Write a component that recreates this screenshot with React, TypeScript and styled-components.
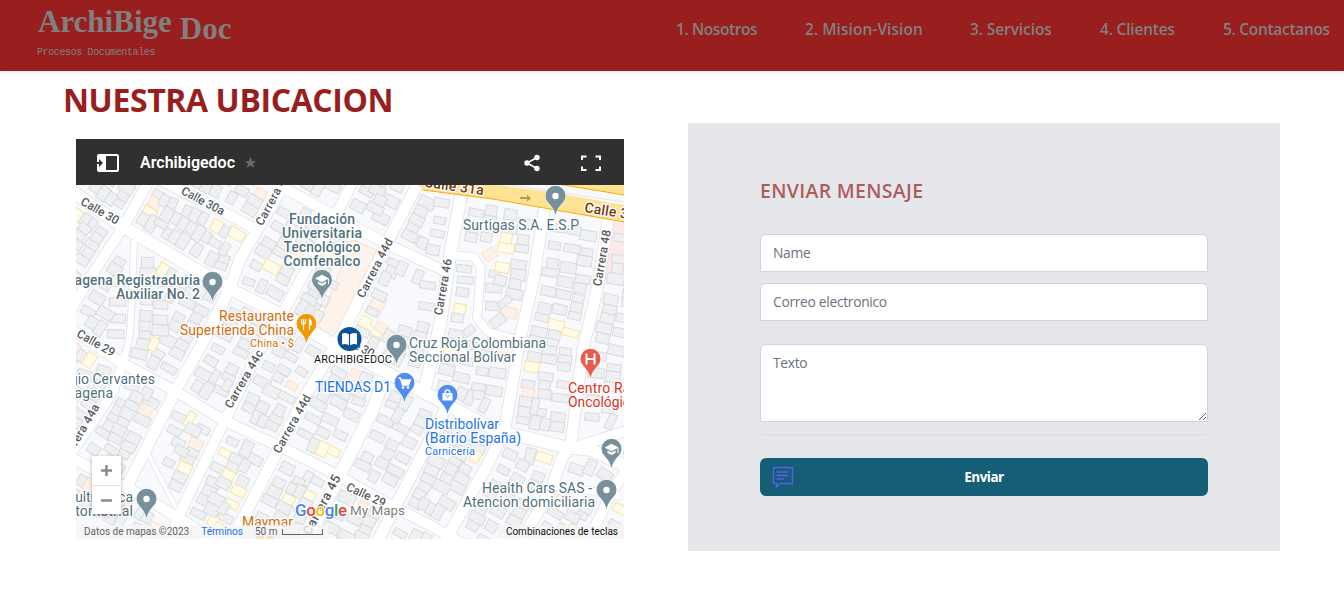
import React from "react";
import styled, { createGlobalStyle } from "styled-components";

const RED = "#981f1e";

const GlobalStyle = createGlobalStyle`
  * { box-sizing: border-box; }
  body { margin: 0; background: #fff; font-family: "Open Sans", "Noto Sans", sans-serif; }
  h1, h2, p { margin: 0; }
`;

const Page = styled.div`
  height: 601px;
  overflow: hidden;
`;

const Header = styled.header`
  display: flex;
  justify-content: space-between;
  height: 71px;
  padding: 0 14px 0 37px;
  background: ${RED};
  color: #808080;
  box-shadow: 0 2px 3px rgba(60, 40, 110, 0.1);
`;

const Brand = styled.div`
  display: flex;
  flex-direction: column;
`;

const BrandName = styled.div`
  display: flex;
  gap: 8px;
  height: 46px;
  padding: 4px 0 0 1px;
  font: bold 31px/36px "Liberation Serif", serif;
`;

const BrandSuffix = styled.span`
  padding-top: 7px;
`;

const Tagline = styled.div`
  font: 10px/14px "Liberation Mono", monospace;
  letter-spacing: -0.38px;
`;

const Nav = styled.nav`
  display: flex;
  gap: 48px;
  padding-top: 17px;
`;

const NavItem = styled.a<{ $w: number; $track: number }>`
  width: ${(p) => p.$w}px;
  font-size: 15.5px;
  font-weight: 600;
  line-height: 24px;
  letter-spacing: ${(p) => p.$track}px;
  white-space: nowrap;
`;

const Main = styled.main`
  display: grid;
  grid-template-columns: 560px 592px;
  column-gap: 64px;
  padding: 0 64px;
`;

const Title = styled.h1`
  grid-column: 1 / -1;
  height: 52px;
  padding-top: 9px;
  margin-left: -1px;
  color: ${RED};
  font-size: 32px;
  font-weight: 700;
  line-height: 40px;
  letter-spacing: -0.4px;
`;

const MapCard = styled.section`
  margin: 16px 0 0 12px;
  width: 548px;
  height: 400px;
`;

const MapBar = styled.div`
  display: flex;
  align-items: center;
  height: 46px;
  padding: 1px 22px 0 21px;
  background: #2f302f;
  color: #fff;
  font: 500 16px/20px Roboto, sans-serif;
`;

const MapName = styled.span`
  margin: 0 10px 0 20px;
  width: 95px;
  font-weight: 600;
`;

const MapActions = styled.div`
  display: flex;
  gap: 40px;
  margin-left: auto;
`;

const MapBody = styled.div`
  position: relative;
  height: 354px;
  overflow: hidden;
`;

const ZoomControl = styled.div`
  position: absolute;
  left: 16px;
  top: 271px;
  display: flex;
  flex-direction: column;
  width: 29px;
  background: #fff;
  box-shadow: 0 1px 4px rgba(0, 0, 0, 0.3);
`;

const ZoomButton = styled.div`
  display: flex;
  align-items: center;
  justify-content: center;
  height: 29px;
  & + & { border-top: 1px solid #e0e0e0; }
`;

const Legal = styled.div`
  position: absolute;
  left: 0;
  right: 0;
  bottom: 0;
  display: flex;
  justify-content: space-between;
  height: 14px;
  font: 10px/14px Roboto, sans-serif;
  color: #5f6368;
`;

const LegalGroup = styled.div`
  display: flex;
  gap: 12px;
  padding: 0 6px 0 8px;
  background: rgba(245, 245, 245, 0.8);
`;

const TermsLink = styled.span`
  color: #1a73e8;
`;

const Shortcuts = styled.span`
  color: #111;
`;

const Scale = styled.span`
  display: flex;
  gap: 5px;
`;

const ScaleBar = styled.i`
  width: 41px;
  height: 6px;
  margin-top: 4px;
  border: 1px solid #666;
  border-top: 0;
`;

const FormCard = styled.section`
  height: 428px;
  padding: 54px 72px 0;
  background: #e5e7eb;
`;

const FormTitle = styled.h2`
  height: 57px;
  color: ${RED};
  opacity: 0.7;
  font-size: 19.5px;
  font-weight: 600;
  line-height: 28px;
  letter-spacing: 0.3px;
`;

const Fields = styled.div`
  display: flex;
  flex-direction: column;
  height: 200px;
  border-radius: 6px;
  box-shadow: 0 1px 2px rgba(0, 0, 0, 0.05);
`;

const fieldLook = `
  display: block;
  width: 100%;
  padding: 8px 12px;
  border: 1px solid #d1d5db;
  border-radius: 6px 6px 0 0;
  background: #fff;
  font: 13.8px/20px "Open Sans", sans-serif;
  letter-spacing: -0.3px;
  outline: none;
  &::placeholder { color: #6b7280; opacity: 1; }
`;

const Input = styled.input<{ $after: number }>`
  ${fieldLook}
  height: 38px;
  padding-top: 7px;
  margin-bottom: ${(p) => p.$after}px;
`;

const TextArea = styled.textarea`
  ${fieldLook}
  height: 78px;
  resize: vertical;
`;

const Submit = styled.button`
  display: grid;
  grid-template-columns: 22px 1fr 22px;
  align-items: center;
  width: 100%;
  height: 38px;
  margin-top: 24px;
  padding: 0 12px;
  border: 0;
  border-radius: 6px;
  background: #155e75;
  color: #fff;
  font: 700 13.5px/20px "Open Sans", sans-serif;
  letter-spacing: -0.5px;
`;

/* ---------- map drawing ---------- */

type Pt = [number, number];
type Road = { w: number; p: Pt[] };

const roads: Road[] = [
  { w: 12, p: [[66, 187], [122, 226], [190, 266], [230, 289], [282, 315], [335, 345], [408, 384], [495, 430], [565, 447], [592, 450], [634, 470]] },
  { w: 10, p: [[160, 180], [210, 205], [257, 230]] },
  { w: 10, p: [[275, 183], [317, 206], [350, 224], [393, 247], [447, 272]] },
  { w: 10, p: [[70, 328], [120, 362], [177, 392], [223, 420], [287, 450], [337, 475], [387, 503], [433, 527], [465, 545]] },
  { w: 10, p: [[70, 457], [137, 493], [187, 523], [220, 545]] },
  { w: 6, p: [[134, 240], [132, 298], [130, 335], [125, 356]] },
  { w: 9, p: [[125, 356], [113, 392], [100, 412], [68, 458]] },
  { w: 10, p: [[148, 183], [123, 227], [90, 278], [66, 318]] },
  { w: 11, p: [[285, 183], [257, 230], [240, 259], [230, 288], [203, 342], [177, 388], [127, 486]] },
  { w: 10, p: [[354, 180], [328, 230], [283, 312], [257, 355], [223, 424], [183, 507], [166, 545]] },
  { w: 11, p: [[418, 183], [390, 237], [342, 334], [303, 400], [272, 462], [237, 530], [230, 545]] },
  { w: 12, p: [[462, 190], [450, 255], [440, 325], [425, 388]] },
  { w: 12, p: [[384, 378], [373, 409], [335, 485], [303, 548]] },
  { w: 11, p: [[445, 410], [408, 482], [374, 548]] },
  { w: 11, p: [[545, 205], [533, 282], [520, 339], [505, 428], [491, 458], [443, 545]] },
  { w: 11, p: [[609, 215], [597, 290], [583, 349], [571, 444], [562, 458], [551, 489], [519, 545]] },
  { w: 10, p: [[630, 465], [613, 490], [586, 545]] },
  { w: 8, p: [[450, 255], [474, 257], [481, 268], [477, 318], [488, 332], [518, 340]] },
  { w: 7, p: [[549, 484], [620, 496]] },
  { w: 4, p: [[145, 448], [176, 508]] },
  { w: 10, p: [[575, 447], [630, 430]] },
];

const highwayAxis: Road = { w: 24, p: [[417, 178], [495, 190], [550, 200], [630, 214]] };

const distToSegment = (x: number, y: number, a: Pt, b: Pt) => {
  const dx = b[0] - a[0];
  const dy = b[1] - a[1];
  const t = Math.max(0, Math.min(1, ((x - a[0]) * dx + (y - a[1]) * dy) / (dx * dx + dy * dy)));
  return Math.hypot(x - a[0] - t * dx, y - a[1] - t * dy);
};

const roadClearance = (x: number, y: number) => {
  let best = 999;
  for (const r of [...roads, highwayAxis])
    for (let i = 1; i < r.p.length; i++)
      best = Math.min(best, distToSegment(x, y, r.p[i - 1], r.p[i]) - r.w / 2);
  return best;
};

/* The university block and the bare lots beside it carry no plots. */
const openGround = (x: number, y: number) =>
  (x > 322 && x < 372 && y > 236 && y < 330 && x - 322 > (330 - y) * 0.2) ||
  (x > 385 && x < 425 && y > 278 && y < 325) ||
  (x > 142 && x < 168 && y > 445 && y < 500);

type Building = { x: number; y: number; w: number; h: number; a: number; kind: number };

/* Lines both sides of every street with plots, leaving crossings free. */
const buildBlocks = (): Building[] => {
  let seed = 41;
  const rnd = () => {
    seed = (seed * 16807) % 2147483647;
    return seed / 2147483647;
  };
  const out: Building[] = [];
  const order = [10, 9, 8, 12, 13, 11, 14, 15, 16, 7, 6, 5, 17, 0, 3, 4, 1, 2];
  for (const off of [10, 26]) {
    for (const idx of order) {
      const r = roads[idx];
      for (let i = 1; i < r.p.length; i++) {
        const [ax, ay] = r.p[i - 1];
        const [bx, by] = r.p[i];
        const len = Math.hypot(bx - ax, by - ay);
        const ux = (bx - ax) / len;
        const uy = (by - ay) / len;
        for (const side of [-1, 1]) {
          let t = 1;
          while (t < len - 4) {
            const w = 7 + rnd() * 4;
            const h = 11 + rnd() * 6;
            const d = side * (r.w / 2 + off + rnd() * 2);
            const x = ax + ux * (t + w / 2) - uy * d;
            const y = ay + uy * (t + w / 2) + ux * d;
            t += w + (rnd() > 0.88 ? 6 : 0);
            const k = rnd();
            if (roadClearance(x, y) < 8 || openGround(x, y)) continue;
            if (out.some((o) => Math.hypot(o.x - x, o.y - y) < (o.w + o.h + w + h) / 4 - 2.6)) continue;
            out.push({ x, y, w, h, a: (Math.atan2(uy, ux) * 180) / Math.PI, kind: k < 0.07 ? 1 : k < 0.1 ? 2 : 0 });
          }
        }
      }
    }
  }
  return out;
};

const buildings = buildBlocks();
const fills = ["#eff0f2", "#fffbe9", "#fef1e8"];
const strokes = ["#d9dbdf", "#fbe3a0", "#fbe0cb"];
const toPath = (p: Pt[]) => "M" + p.map((q) => q.join(" ")).join("L");

const Label = styled.text<{ $c?: string; $s?: number; $wt?: number }>`
  font-family: Roboto, sans-serif;
  font-size: ${(p) => p.$s ?? 14}px;
  font-weight: ${(p) => p.$wt ?? 400};
  fill: ${(p) => p.$c ?? "#52707c"};
  stroke: #fff;
  stroke-width: 2.6px;
  stroke-linejoin: round;
  paint-order: stroke;
`;

type Line = {
  t: string; x: number; y: number; w: number;
  c?: string; s?: number; wt?: number; a?: "start" | "middle" | "end"; r?: number;
};

const street = "#565a5e";
const brown = "#77390b";
const labels: Line[] = [
  { t: "Calle 30", x: 100, y: 211, w: 42, r: 30, s: 12, c: street, a: "middle", wt: 500 },
  { t: "Calle 30a", x: 203, y: 201, w: 47, r: 28, s: 12, c: street, a: "middle", wt: 500 },
  { t: "Carrera 44c", x: 274, y: 196, w: 65, r: -62, s: 12, c: street, a: "middle", wt: 500 },
  { t: "Carrera 44d", x: 375, y: 268, w: 65, r: -63, s: 12, c: street, a: "middle", wt: 500 },
  { t: "Carrera 46", x: 443, y: 287, w: 57, r: -80, s: 12, c: street, a: "middle", wt: 500 },
  { t: "Carrera 48", x: 602, y: 258, w: 57, r: -80, s: 12, c: street, a: "middle", wt: 500 },
  { t: "Calle 29", x: 96, y: 355, w: 42, r: 30, s: 12, c: street, a: "middle", wt: 500 },
  { t: "Carrera 44c", x: 244, y: 391, w: 65, r: -60, s: 12, c: street, a: "middle", wt: 500 },
  { t: "Carrera 44d", x: 292, y: 436, w: 65, r: -61, s: 12, c: street, a: "middle", wt: 500 },
  { t: "Carrera 44a", x: 80, y: 445, w: 65, r: -60, s: 12, c: street, a: "middle", wt: 500 },
  { t: "Carrera 45", x: 322, y: 517, w: 66, r: -62, s: 13, c: street, a: "middle", wt: 500 },
  { t: "Calle 29", x: 366, y: 507, w: 42, r: 25, s: 12, c: street, a: "middle", wt: 500 },
  { t: "Calle 30", x: 356, y: 357, w: 40, r: 28, s: 12, c: street, a: "middle", wt: 500 },
  { t: "Calle 31a", x: 454, y: 187, w: 60, r: 8, s: 14, c: brown, a: "middle", wt: 500 },
  { t: "Calle 31", x: 584, y: 212, w: 52, r: 9, s: 14, c: brown, wt: 500 },
  { t: "Fundación", x: 322, y: 224, w: 66, a: "middle", wt: 500 },
  { t: "Universitaria", x: 322, y: 238, w: 80, a: "middle", wt: 500 },
  { t: "Tecnológico", x: 322, y: 252, w: 77, a: "middle", wt: 500 },
  { t: "Comfenalco", x: 322, y: 266, w: 77, a: "middle", wt: 500 },
  { t: "Surtigas S.A. E.S.P", x: 463, y: 230, w: 116 },
  { t: "Cartagena Registraduria", x: 200, y: 285, w: 152, a: "end", wt: 500 },
  { t: "Auxiliar No. 2", x: 200, y: 299, w: 84, a: "end", wt: 500 },
  { t: "Restaurante", x: 294, y: 321, w: 75, a: "end", c: "#d36b08" },
  { t: "Supertienda China", x: 294, y: 335, w: 114, a: "end", c: "#d36b08" },
  { t: "China • $", x: 294, y: 347, w: 44, a: "end", s: 11, c: "#d36b08" },
  { t: "Cruz Roja Colombiana", x: 409, y: 348, w: 137 },
  { t: "Seccional Bolívar", x: 409, y: 362, w: 107 },
  { t: "TIENDAS D1", x: 391, y: 392, w: 76, a: "end", c: "#1a73e8" },
  { t: "Distribolívar", x: 425, y: 429, w: 74, c: "#1a73e8" },
  { t: "(Barrio España)", x: 425, y: 443, w: 96, c: "#1a73e8" },
  { t: "Carnicería", x: 425, y: 455, w: 50, s: 11, c: "#1a73e8" },
  { t: "Centro Radio", x: 568, y: 393, w: 82, c: "#d93025" },
  { t: "Oncológico", x: 568, y: 407, w: 70, c: "#d93025" },
  { t: "Colegio Cervantes", x: 155, y: 384, w: 113, a: "end" },
  { t: "Cartagena", x: 113, y: 398, w: 65, a: "end" },
  { t: "Multimarca", x: 133, y: 502, w: 70, a: "end" },
  { t: "Automotrial", x: 133, y: 516, w: 75, a: "end" },
  { t: "Maymar", x: 242, y: 527, w: 51, c: "#d36b08" },
  { t: "Health Cars SAS -", x: 592, y: 493, w: 110, a: "end" },
  { t: "Atencion domiciliaria", x: 595, y: 507, w: 132, a: "end" },
];

/* Street names turn about their own centre; the rest sit on a baseline. */
const MapLabel = ({ t, x, y, w, c, s, wt, a, r }: Line) => (
  <Label
    x={x} y={y} $c={c} $s={s} $wt={wt} textAnchor={a} textLength={w}
    transform={r ? `rotate(${r} ${x} ${y - (Math.abs(r) > 10 && y > 300 ? 12 : 0)}) translate(0 ${Math.abs(r) > 10 && y > 300 ? -8 : a ? 4 : 0})` : undefined}
  >
    {t}
  </Label>
);

const Pin = ({ x, y, c, children }: { x: number; y: number; c: string; children?: React.ReactNode }) => (
  <g transform={`translate(${x} ${y})`}>
    <path
      d="M0 19C-1.4 13-4 10.5-6.8 7A10 10 0 1 1 6.8 7C4 10.5 1.4 13 0 19Z"
      fill={c} stroke="#fff" strokeWidth="1" paintOrder="stroke"
    />
    {children ?? <circle r="3.2" fill="#fff" />}
  </g>
);

const Cap = () => (
  <g fill="#fff">
    <path d="M-7-1.5L0-5.2 7-1.5 0 2.2Z" />
    <path d="M-4 1.5L0 3.6 4 1.5V4L0 6-4 4ZM6-1h1v5H6Z" />
  </g>
);

const slate = "#78909c";

const CityMap = () => (
  <svg width="548" height="354" viewBox="76 185 548 354" style={{ display: "block" }}>
    <rect x="76" y="185" width="548" height="354" fill="#f7f9fc" />
    <path d="M612 222L628 224V288L602 279Z" fill="#fce8e6" />
    <path d="M352 240L377 250 334 338 318 326Z" fill="#fef3ea" stroke="#fbe0cb" />
    <path d="M309 289L327 290 315 322 296 314Z" fill="#ececec" stroke="#dadce0" />
    <path d="M363 315L372 320 370 326 383 332 379 338 357 327Z" fill="#fffbe9" stroke="#fbe3a0" />
    <path d="M376 292L387 300 378 318 366 312Z" fill="#fef1e8" stroke="#fbe0cb" />
    {buildings.map((b, i) => (
      <rect
        key={i} x={-b.w / 2} y={-b.h / 2} width={b.w} height={b.h}
        fill={fills[b.kind]} stroke={strokes[b.kind]} strokeWidth="1"
        transform={`translate(${b.x.toFixed(1)} ${b.y.toFixed(1)}) rotate(${b.a.toFixed(1)})`}
      />
    ))}
    <g fill="none" strokeLinejoin="round">
      {roads.map((r, i) => <path key={i} d={toPath(r.p)} stroke="#dfe2e6" strokeWidth={r.w + 1.6} />)}
      {roads.map((r, i) => <path key={i} d={toPath(r.p)} stroke="#fff" strokeWidth={r.w} />)}
    </g>
    <path d="M495 183L630 203V217L550 199Z" fill="#fff" stroke="#dfe3e8" />
    <path d="M417 183H480L550 192 630 206V223L550 209 493 199 423 190Z" fill="#fde293" />
    <path d="M423 190L493 199 550 209 630 223" fill="none" stroke="#f9ab00" />
    <path d="M552 183H630V196Z" fill="#fde293" stroke="#f9ab00" />
    <path d="M520 197h7v-2.500l4 4-4 3V199h-7Z" fill="#b39a5c" />

    {labels.map((l, i) => <MapLabel key={i} {...l} />)}

    <Pin x={555.5} y={196} c={slate} />
    <Pin x={322} y={280} c={slate}><Cap /></Pin>
    <Pin x={212.5} y={282} c={slate} />
    <Pin x={396.5} y={345} c={slate} />
    <Pin x={146.5} y={499} c={slate} />
    <Pin x={606.5} y={490} c={slate} />
    <Pin x={611.5} y={449} c={slate}><Cap /></Pin>
    <Pin x={306.5} y={324} c="#f29900">
      <g stroke="#fff" fill="none" strokeWidth="1.2">
        <path d="M-5-5V-2Q-5 0-3 0T-1-2V-5M-3-5V6" />
        <path d="M3 6V-5Q5.5-3 4.5 1H3" fill="#fff" />
      </g>
    </Pin>
    <Pin x={404.5} y={383} c="#4f8df5">
      <path d="M-6-5H-4L-2 2H4L6-3H-3.5" fill="#fff" stroke="#fff" strokeWidth="1.3" />
      <circle cx="-1.5" cy="4.5" r="1.3" fill="#fff" /><circle cx="3.5" cy="4.5" r="1.3" fill="#fff" />
    </Pin>
    <Pin x={447.5} y={395} c="#4f8df5">
      <path d="M-5-2H5V5.5H-5Z" fill="#fff" />
      <path d="M-2.5-2A2.5 3.2 0 0 1 2.5-2" fill="none" stroke="#fff" strokeWidth="1.3" />
      <path d="M-2 .5Q0 3.500 2 .5" fill="none" stroke="#4f8df5" />
    </Pin>
    <Pin x={590.5} y={359} c="#e95a50">
      <path d="M-4-5.5V5.5M4-5.5V5.5M-4 0H4" stroke="#fff" strokeWidth="2" />
    </Pin>
    <Label x="314" y="363" $s={11} $c="#111" textLength="78">ARCHIBIGEDOC</Label>
    <circle cx="349.5" cy="339" r="12" fill="#0b5397" />
    <path d="M349.5 334.500Q346 332 342 333.500V344.500Q346 343 349.500 345.500 353 343 357 344.500V333.500Q353 332 349.500 334.500Z" fill="#fff" />
    <path d="M349.5 334V346" stroke="#0b5397" strokeWidth="1.2" />
    <path d="M256 538h8M267 538h7" stroke="#f29900" strokeWidth="4" />

    <Label x="295" y="516" $s={17} $wt={500} textLength="52" style={{ strokeWidth: 2 }}>
      <tspan fill="#4285f4">G</tspan><tspan fill="#ea4335">o</tspan><tspan fill="#fbbc04">o</tspan>
      <tspan fill="#4285f4">g</tspan><tspan fill="#34a853">l</tspan><tspan fill="#ea4335">e</tspan>
    </Label>
    <Label x="350" y="515" $s={13.5} $wt={400} $c="#80807c" textLength="55">My Maps</Label>
  </svg>
);

const navItems: [string, number, number][] = [
  ["1. Nosotros", 81, -0.4],
  ["2. Mision-Vision", 117, 0.05],
  ["3. Servicios", 82, -0.1],
  ["4. Clientes", 75, -0.2],
  ["5. Contactanos", 107, -0.3],
];

export default function App() {
  return (
    <Page>
      <GlobalStyle />
      <Header>
        <Brand>
          <BrandName>
            <span>ArchiBige</span>
            <BrandSuffix>Doc</BrandSuffix>
          </BrandName>
          <Tagline>Procesos Documentales</Tagline>
        </Brand>
        <Nav>
          {navItems.map(([label, w, track]) => <NavItem key={label} $w={w} $track={track}>{label}</NavItem>)}
        </Nav>
      </Header>
      <Main>
        <Title>NUESTRA UBICACION</Title>
        <MapCard>
          <MapBar>
            <svg width="23" height="18" viewBox="0 0 23 18">
              <path d="M2 0H7V18H2Q0 18 0 16V10H2V13L6 9 2 5V8H0V2Q0 0 2 0Z" fill="#fff" />
              <path d="M8 1H20Q21 1 21 2V16Q21 17 20 17H8Z" fill="none" stroke="#fff" strokeWidth="2" />
            </svg>
            <MapName>Archibigedoc</MapName>
            <svg width="11" height="11" viewBox="0 0 24 24">
              <path d="M12 0l3.5 8.500 8.500.6-6.600 5.600 2.200 8.800L12 18.500l-7.600 5 2.200-8.800L0 9.100l8.500-.6Z" fill="#686a69" />
            </svg>
            <MapActions>
              <svg width="18" height="18" viewBox="0 0 18 18" fill="#fff">
                <path d="M14 3.500L4 9l10 5.500" fill="none" stroke="#fff" strokeWidth="1.6" />
                <circle cx="14" cy="3.500" r="2.700" /><circle cx="4" cy="9" r="2.700" /><circle cx="14" cy="14.500" r="2.700" />
              </svg>
              <svg width="21" height="18" viewBox="2 0 21 18" fill="none" stroke="#fff" strokeWidth="2">
                <path d="M3 6V2.500H7.500M16.500 2.500H21V6M21 12.500V16H16.500M7.500 16H3V12.500" />
              </svg>
            </MapActions>
          </MapBar>
          <MapBody>
            <CityMap />
            <ZoomControl>
              <ZoomButton>
                <svg width="11" height="11"><path d="M0 5.500H11M5.500 0V11" stroke="#8c8c8c" strokeWidth="2.500" /></svg>
              </ZoomButton>
              <ZoomButton>
                <svg width="11" height="11"><path d="M0 5.500H11" stroke="#8c8c8c" strokeWidth="2.500" /></svg>
              </ZoomButton>
            </ZoomControl>
            <Legal>
              <LegalGroup>
                <span>Datos de mapas ©2023</span>
                <TermsLink>Términos</TermsLink>
                <Scale>50 m<ScaleBar /></Scale>
              </LegalGroup>
              <LegalGroup>
                <Shortcuts>Combinaciones de teclas</Shortcuts>
              </LegalGroup>
            </Legal>
          </MapBody>
        </MapCard>
        <FormCard>
          <FormTitle>ENVIAR MENSAJE</FormTitle>
          <Fields>
            <Input placeholder="Name" $after={11} />
            <Input placeholder="Correo electronico" $after={23} />
            <TextArea placeholder="Texto" />
          </Fields>
          <Submit>
            <svg width="22" height="22" viewBox="0 0 22 22" fill="none" stroke="#5b5fe8" strokeWidth="1.4">
              <path d="M1.500 1.500H20.500V17.500H8L4.500 21V17.500H1.500Z" />
              <path d="M4.500 6H16.500M4.500 9.500H15.500M4.500 13H12" />
            </svg>
            <span>Enviar</span>
          </Submit>
        </FormCard>
      </Main>
    </Page>
  );
}
